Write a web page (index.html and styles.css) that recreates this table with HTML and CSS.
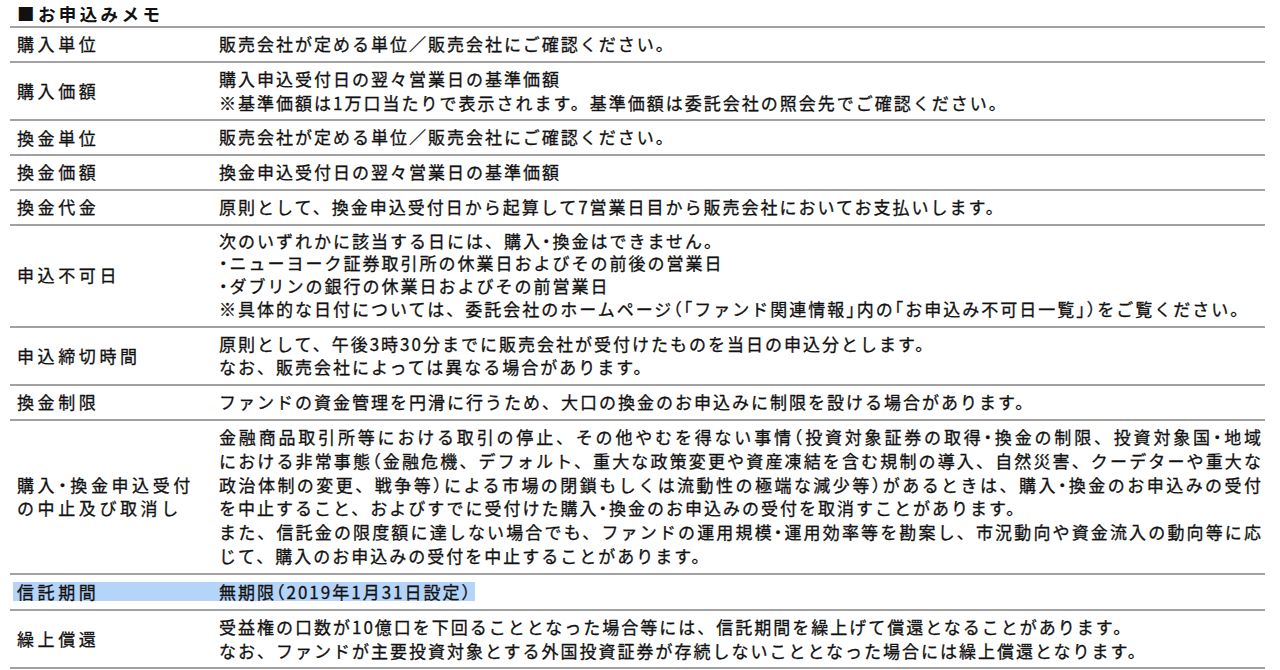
FILE: index.html
```html
<!DOCTYPE html>
<html lang="ja">
<head>
<meta charset="utf-8">
<title>お申込みメモ</title>
<link rel="stylesheet" href="styles.css">
</head>
<body>
<div class="memo">
  <div class="title">■お申込みメモ</div>

  <div class="row">
    <div class="lbl">購入単位</div>
    <div class="val"><p>販売会社が定める単位／販売会社にご確認ください。</p></div>
  </div>

  <div class="row">
    <div class="lbl">購入価額</div>
    <div class="val">
      <p>購入申込受付日の翌々営業日の基準価額</p>
      <p>※基準価額は1万口当たりで表示されます。基準価額は委託会社の照会先でご確認ください。</p>
    </div>
  </div>

  <div class="row">
    <div class="lbl">換金単位</div>
    <div class="val"><p>販売会社が定める単位／販売会社にご確認ください。</p></div>
  </div>

  <div class="row">
    <div class="lbl">換金価額</div>
    <div class="val"><p>換金申込受付日の翌々営業日の基準価額</p></div>
  </div>

  <div class="row">
    <div class="lbl">換金代金</div>
    <div class="val"><p>原則として、換金申込受付日から起算して7営業日目から販売会社においてお支払いします。</p></div>
  </div>

  <div class="row tight">
    <div class="lbl">申込不可日</div>
    <div class="val">
      <p>次のいずれかに該当する日には、購入<span class="n">・</span>換金はできません。</p>
      <p><span class="n">・</span>ニューヨーク証券取引所の休業日およびその前後の営業日</p>
      <p><span class="n">・</span>ダブリンの銀行の休業日およびその前営業日</p>
      <p>※具体的な日付については、委託会社のホームページ<span class="n">（「</span>ファンド関連情報<span class="n">」</span>内の<span class="n">「</span>お申込み不可日一覧<span class="n">」）</span>をご覧ください。</p>
    </div>
  </div>

  <div class="row">
    <div class="lbl">申込締切時間</div>
    <div class="val">
      <p>原則として、午後3時30分までに販売会社が受付けたものを当日の申込分とします。</p>
      <p>なお、販売会社によっては異なる場合があります。</p>
    </div>
  </div>

  <div class="row">
    <div class="lbl">換金制限</div>
    <div class="val"><p>ファンドの資金管理を円滑に行うため、大口の換金のお申込みに制限を設ける場合があります。</p></div>
  </div>

  <div class="row">
    <div class="lbl">購入<span class="n">・</span>換金申込受付<br>の中止及び取消し</div>
    <div class="val">
      <p class="j">金融商品取引所等における取引の停止、その他やむを得ない事情<span class="n">（</span>投資対象証券の取得<span class="n">・</span>換金の制限、投資対象国<span class="n">・</span>地域</p>
      <p class="j">における非常事態<span class="n">（</span>金融危機、デフォルト、重大な政策変更や資産凍結を含む規制の導入、自然災害、クーデターや重大な</p>
      <p class="j">政治体制の変更、戦争等<span class="n">）</span>による市場の閉鎖もしくは流動性の極端な減少等<span class="n">）</span>があるときは、購入<span class="n">・</span>換金のお申込みの受付</p>
      <p>を中止すること、およびすでに受付けた購入<span class="n">・</span>換金のお申込みの受付を取消すことがあります。</p>
      <p class="j">また、信託金の限度額に達しない場合でも、ファンドの運用規模<span class="n">・</span>運用効率等を勘案し、市況動向や資金流入の動向等に応</p>
      <p>じて、購入のお申込みの受付を中止することがあります。</p>
    </div>
  </div>

  <div class="row sel-row">
    <div class="sel">
      <div class="lbl">信託期間</div>
      <div class="val"><p>無期限<span class="n">（</span>2019年1月31日設定<span class="n">）</span></p></div>
    </div>
  </div>

  <div class="row">
    <div class="lbl">繰上償還</div>
    <div class="val">
      <p>受益権の口数が10億口を下回ることとなった場合等には、信託期間を繰上げて償還となることがあります。</p>
      <p>なお、ファンドが主要投資対象とする外国投資証券が存続しないこととなった場合には繰上償還となります。</p>
    </div>
  </div>
</div>
</body>
</html>
```

FILE: styles.css
```css
html, body {
  margin: 0;
  padding: 0;
  background: #ffffff;
}

body {
  font-family: "Noto Sans CJK JP", "Noto Sans", sans-serif;
  font-size: 17px;
  letter-spacing: 2px;
  color: #111111;
  -webkit-text-stroke: 0.3px #111111;
}

.memo {
  margin-left: 10px;
  width: 1255px;
}

.title {
  height: 26px;
  line-height: 28px;
  padding-left: 7px;
  font-size: 17.5px;
  font-weight: bold;
  letter-spacing: 3.4px;
  -webkit-text-stroke: 0;
  border-bottom: 2px solid #a2a2a2;
}

.row {
  display: grid;
  grid-template-columns: 209px 1fr;
  align-items: center;
  padding: 4px 0 5px;
  border-bottom: 2px solid #a2a2a2;
}

.lbl {
  padding-left: 7px;
  letter-spacing: 3.6px;
  line-height: 23.5px;
}

.val {
  padding-right: 3px;
}

.val p {
  margin: 0;
  line-height: 23.8px;
  white-space: nowrap;
}

.tight .val p {
  line-height: 22.7px;
}

.val p.j {
  white-space: normal;
  text-align: justify;
  text-align-last: justify;
  letter-spacing: 1px;
}

.n {
  font-feature-settings: "halt";
}

.sel-row {
  display: block;
}

.sel {
  display: inline-grid;
  grid-template-columns: 206px auto;
  margin-left: 3px;
  align-items: center;
  background: #b4d4fa;
  line-height: 19px;
}

.sel .lbl {
  padding-left: 4px;
  line-height: 19px;
}

.sel .val p {
  line-height: 19px;
}
```
